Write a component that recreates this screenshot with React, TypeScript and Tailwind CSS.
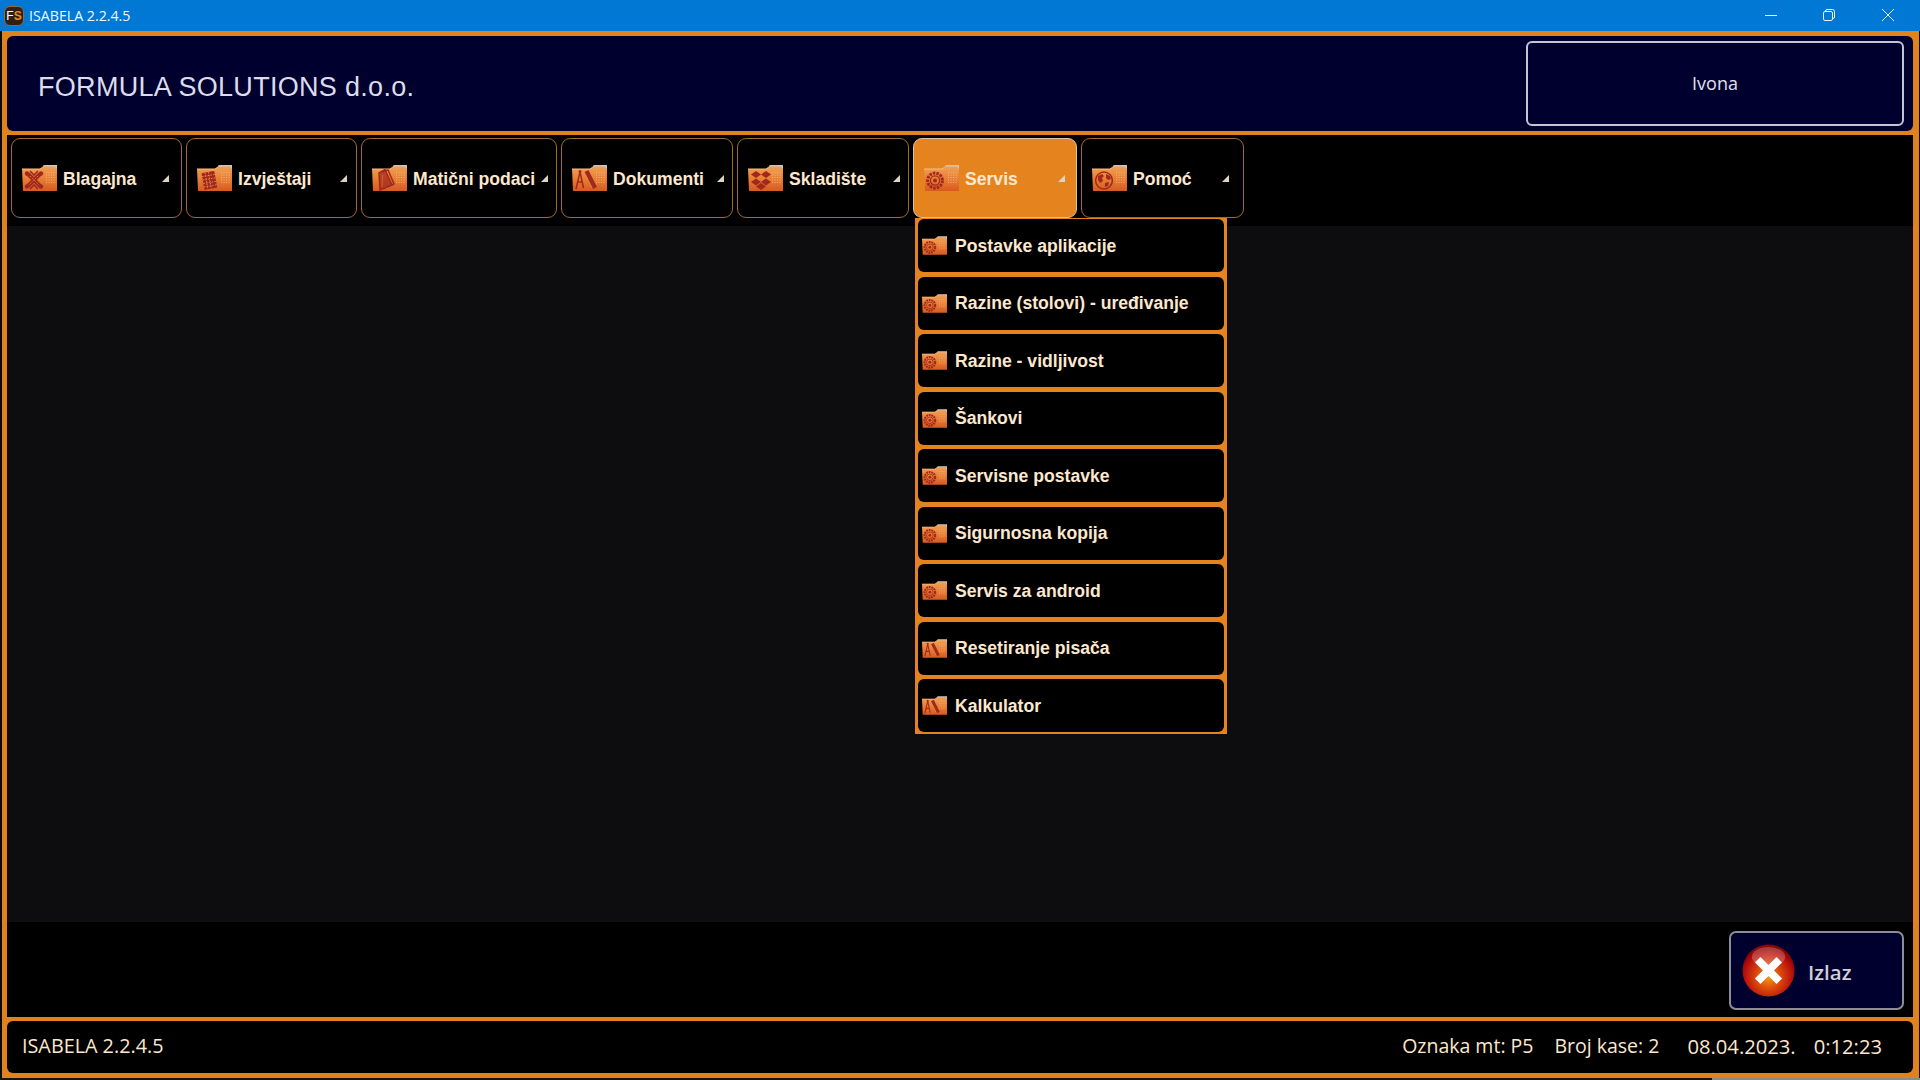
const red = "#a3281c";
const body = "#e8803a";

function Glyph({ kind }: { kind: string }) {
  if (kind === "joomla")
    return (
      <g stroke={red} fill="none">
        <path d="M6 9 L18 21 M18 9 L6 21" strokeWidth="4" />
        <path d="M6 9 L18 21 M18 9 L6 21" strokeWidth="1" stroke={body} strokeDasharray="1.5 1.5" />
        <path d="M8 6 L12 10 L16 6 M8 24 L12 20 L16 24" strokeWidth="1.6" />
        <circle cx="5" cy="8.5" r="2.2" fill={red} stroke="none" />
        <circle cx="19" cy="8.5" r="2.2" fill={red} stroke="none" />
        <circle cx="5" cy="21.5" r="2.2" fill={red} stroke="none" />
        <circle cx="19" cy="21.5" r="2.2" fill={red} stroke="none" />
      </g>
    );
  if (kind === "list")
    return (
      <g transform="rotate(-10 12 16)">
        <rect x="6" y="7" width="13" height="17" fill={red} rx="1" />
        <path d="M9.5 7 V24 M13 7 V24 M6 10.5 H19 M6 14 H19 M6 17.5 H19 M6 21 H19" stroke="#e8864a" strokeWidth="0.9" strokeDasharray="1.6 1.2" />
      </g>
    );
  if (kind === "doc")
    return (
      <g fill="none" stroke={red} strokeWidth="1.5">
        <path d="M7 8 L13 4.5 L20 20 L8 25 Z" fill={red} fillOpacity="0.75" />
        <path d="M10 7 L16 5 L22 19 L20 20" />
        <path d="M10.5 10 L10 22" stroke="#d9662e" strokeWidth="0.9" />
      </g>
    );
  if (kind === "books")
    return (
      <g stroke={red} fill="none">
        <path d="M8 7 L4 24 M8 7 L11.5 23 M5.8 17 L10.4 17" strokeWidth="1.5" />
        <circle cx="8" cy="6.5" r="1.5" fill={red} stroke="none" />
        <path d="M14.5 6 L23 23" strokeWidth="4.4" />
        <path d="M12.6 8 L20 23" stroke="#e8864a" strokeWidth="0.7" />
      </g>
    );
  if (kind === "dropbox")
    return (
      <g fill={red}>
        <path d="M8 6 L13 9.5 L8 13 L3 9.5 Z" />
        <path d="M18 6 L23 9.5 L18 13 L13 9.5 Z" />
        <path d="M8 13.5 L13 17 L8 20.5 L3 17 Z" />
        <path d="M18 13.5 L23 17 L18 20.5 L13 17 Z" />
        <path d="M13 18 L18 21.5 L13 25 L8 21.5 Z" />
      </g>
    );
  if (kind === "gear")
    return (
      <g fill="none" stroke={red}>
        <circle cx="11" cy="15.5" r="7.4" strokeWidth="3" strokeDasharray="2.6 1" />
        <circle cx="11" cy="15.5" r="4.6" strokeWidth="1.2" />
        <circle cx="11" cy="15.5" r="2" fill={red} stroke="none" />
      </g>
    );
  return (
    <g>
      <circle cx="12" cy="15.5" r="8.4" fill="none" stroke={red} strokeWidth="1.5" />
      <path d="M6 11 L10 9 L12 11 L10 13 L11 16 L8 18 L6 15 Z M14 9 L18 11 L19 14 L16 15 L14 13 Z M13 18 L17 17 L16 21 L13 22 Z" fill={red} />
    </g>
  );
}

function Folder({ kind, small }: { kind: string; small?: boolean }) {
  return (
    <svg viewBox="0 0 35 26" className={small ? "w-[25px] h-[19px] shrink-0" : "w-[35px] h-[26px] shrink-0"}>
      <path d="M21 1 Q21 0 23 0 H35 V8 H19 Z" fill="#c9c6c4" />
      <path d="M0 4 H18 L21 1.5 H33 L35 4 V26 H1 Z" fill="url(#folderBody)" />
      <path d="M0 4 H18 L20.5 2.4" stroke="#f5bd84" strokeWidth="1" fill="none" />
      <g fill="#f7bd84" opacity="0.75">
        {[24, 26.5, 29, 31.5].map((x) =>
          [7, 9.5, 12, 14.5, 17].map((y) => <rect key={x + "-" + y} x={x} y={y} width="1.1" height="1.1" />)
        )}
      </g>
      <Glyph kind={kind} />
    </svg>
  );
}

function Arrow({ className }: { className: string }) {
  return (
    <svg viewBox="0 0 7 7" className={"w-[7px] h-[7px] shrink-0 " + className}>
      <polygon points="7,0 7,7 0,7" fill="#ded3c4" />
    </svg>
  );
}

const menus = [
  { label: "Blagajna", kind: "joomla", width: "w-[171px]", arrow: "mr-[12px]" },
  { label: "Izvještaji", kind: "list", width: "w-[171px]", arrow: "mr-[9px]" },
  { label: "Matični podaci", kind: "doc", width: "w-[196px]", arrow: "mr-[10px]" },
  { label: "Dokumenti", kind: "books", width: "w-[172px]", arrow: "mr-[8px]" },
  { label: "Skladište", kind: "dropbox", width: "w-[172px]", arrow: "mr-[8px]" },
  { label: "Servis", kind: "gear", width: "w-[164px]", arrow: "mr-[11px]", active: true },
  { label: "Pomoć", kind: "globe", width: "w-[163px]", arrow: "mr-[14px]" },
];

const items = [
  { label: "Postavke aplikacije", kind: "gear" },
  { label: "Razine (stolovi) - uređivanje", kind: "gear" },
  { label: "Razine - vidljivost", kind: "gear" },
  { label: "Šankovi", kind: "gear" },
  { label: "Servisne postavke", kind: "gear" },
  { label: "Sigurnosna kopija", kind: "gear" },
  { label: "Servis za android", kind: "gear" },
  { label: "Resetiranje pisača", kind: "books" },
  { label: "Kalkulator", kind: "books" },
];

function Dropdown() {
  return (
    <div className="absolute left-[2px] top-[80px] w-[312px] h-[516px] z-10 bg-[#e5841f] pt-[1px] px-[3px] flex flex-col gap-[4.5px]">
      {items.map((it) => (
        <div key={it.label} className="h-[53px] shrink-0 bg-black rounded-[6px] flex items-center pl-[4px] gap-[8px] text-[17.6px] font-bold text-[#fde8cf] font-['Liberation_Sans',Arial,sans-serif]">
          <Folder kind={it.kind} small />
          <span className="pt-[1px]">{it.label}</span>
        </div>
      ))}
    </div>
  );
}

export default function App() {
  return (
    <div className="w-[1920px] h-[1080px] overflow-hidden bg-[#0b0b0b] flex flex-col">
      <svg className="absolute w-0 h-0">
        <defs>
          <linearGradient id="folderBody" x1="0" y1="0" x2="0" y2="1">
            <stop offset="0" stopColor="#f0a157" />
            <stop offset="0.5" stopColor="#e87f35" />
            <stop offset="1" stopColor="#d9591f" />
          </linearGradient>
          <radialGradient id="exitBall" cx="0.5" cy="0.62" r="0.55">
            <stop offset="0" stopColor="#f59a10" />
            <stop offset="0.45" stopColor="#d9480c" />
            <stop offset="0.85" stopColor="#b80d0d" />
            <stop offset="1" stopColor="#8a0606" />
          </radialGradient>
        </defs>
      </svg>

      <div className="h-[31px] shrink-0 bg-[#0078d4] flex items-center text-white">
        <div className="w-[20px] h-[20px] ml-[4px] rounded-[6px] bg-[#2e2018] border border-[#8a6a4a] flex items-center justify-center text-[12px] leading-none font-['Liberation_Sans',sans-serif]">
          <span>F</span>
          <span className="text-[#f08a24] font-bold">S</span>
        </div>
        <span className="ml-[5px] text-[14.2px] font-['Open_Sans',sans-serif] text-[#f2f8fd]">ISABELA 2.2.4.5</span>
        <div className="ml-auto flex items-center mr-[26px] -translate-y-[1px]">
          <svg viewBox="0 0 12 12" className="w-[12px] h-[12px]"><path d="M0 6.5 H12" stroke="#e8f3fb" strokeWidth="1" /></svg>
          <svg viewBox="0 0 12 12" className="w-[12px] h-[12px] ml-[46px]"><path d="M2.5 2.5 V2 Q2.5 .5 4 .5 H9.5 Q11.5 .5 11.5 2.5 V8 Q11.5 9.5 10 9.5 M2 2.5 H8 Q9.5 2.5 9.5 4 V10 Q9.5 11.5 8 11.5 H2 Q.5 11.5 .5 10 V4 Q.5 2.5 2 2.5 Z" stroke="#e8f3fb" strokeWidth="1" fill="none" /></svg>
          <svg viewBox="0 0 12 12" className="w-[12px] h-[12px] ml-[47px]"><path d="M0 0 L12 12 M12 0 L0 12" stroke="#e8f3fb" strokeWidth="1" /></svg>
        </div>
      </div>

      <div className="flex-1 min-h-0 ml-[2px] mr-[1px] bg-[#e0821f] pl-[5px] pr-[6px] py-[5px] flex flex-col">
        <div className="h-[95px] shrink-0 bg-[#00002e] rounded-[6px] flex items-center justify-between pr-[9px]">
          <span className="ml-[31px] mt-[8px] text-[27px] tracking-[0.3px] text-[#dcdcec] font-['Liberation_Sans',Arial,sans-serif]">FORMULA SOLUTIONS d.o.o.</span>
          <div className="w-[378px] h-[85px] rounded-[6px] border-2 border-[#c4c4d6] flex items-center justify-center text-[18px] text-[#e0e0f0] font-['Open_Sans',sans-serif]">Ivona</div>
        </div>

        <div className="mt-[4px] h-[91px] shrink-0 bg-black pt-[3px] pl-[4px] flex gap-[4px]">
          {menus.map((m) => (
            <div key={m.label} className={"relative h-[80px] shrink-0 " + m.width}>
              <div
                className={
                  "h-full rounded-[9px] border flex items-center pl-[10px] gap-[6px] text-[17.6px] font-bold text-[#fde8cf] font-['Liberation_Sans',Arial,sans-serif] " +
                  (m.active ? "bg-[#e5841f] border-[#d8c4a8]" : "bg-black border-[#a06a30]")
                }
              >
                <Folder kind={m.kind} />
                <span className="whitespace-nowrap pt-[2px]">{m.label}</span>
                <Arrow className={"ml-auto " + m.arrow} />
              </div>
              {m.active && <Dropdown />}
            </div>
          ))}
        </div>

        <div className="flex-1 min-h-0 bg-[#0d0d0f]" />

        <div className="h-[95px] shrink-0 bg-black flex items-center justify-end pr-[9px] pt-[2px]">
          <div className="w-[175px] h-[79px] rounded-[7px] border-2 border-[#8d8d99] bg-[#00002e] flex items-center pl-[11px] gap-[13px]">
            <svg viewBox="0 0 54 54" className="w-[53px] h-[53px] shrink-0">
              <circle cx="27" cy="27" r="26.5" fill="url(#exitBall)" />
              <ellipse cx="27" cy="13" rx="17" ry="10" fill="#ffffff" opacity="0.22" />
              <path d="M16 16 L38 38 M38 16 L16 38" stroke="#fff" strokeWidth="8" strokeLinecap="butt" />
            </svg>
            <span className="mt-[4px] text-[20.5px] font-semibold text-[#cfcfd6] font-['Open_Sans',sans-serif]">Izlaz</span>
          </div>
        </div>

        <div className="mt-[4px] h-[52px] shrink-0 bg-black rounded-[6px] flex items-center pl-[15px] pr-[31px] pb-[2px] text-[19.5px] text-[#fde8cf] font-['Open_Sans',sans-serif]">
          <span className="text-[19.8px]">ISABELA 2.2.4.5</span>
          <span className="ml-auto">Oznaka mt: P5</span>
          <span className="ml-[21px]">Broj kase: 2</span>
          <span className="ml-[28px] text-[20.2px]">08.04.2023.</span>
          <span className="ml-[18px] text-[20.2px]">0:12:23</span>
        </div>
      </div>

      <div className="h-[2px] shrink-0 flex">
        <div className="flex-1 bg-[#1a1208]" />
        <div className="w-[208px] bg-[#8a8a8a]" />
      </div>
    </div>
  );
}
